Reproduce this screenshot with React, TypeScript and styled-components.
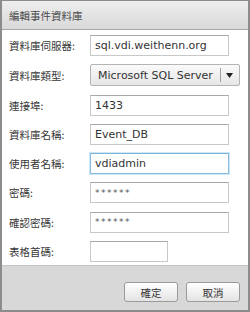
import React, { useState } from 'react';
import styled, { createGlobalStyle } from 'styled-components';

const GlobalStyle = createGlobalStyle`
  html, body {
    margin: 0;
    padding: 0;
    background: #ffffff;
  }
  * {
    box-sizing: border-box;
  }
`;

const Dialog = styled.div`
  width: 250px;
  height: 312px;
  display: flex;
  flex-direction: column;
  border: 1px solid #8c8c8c;
  border-left: 2px solid #8c8c8c;
  border-right: 2px solid #8c8c8c;
  border-bottom: 2px solid #8c8c8c;
  background: #ffffff;
  font-family: "DejaVu Sans", Verdana, "Noto Sans CJK TC", sans-serif;
  color: #333333;
`;

const TitleBar = styled.div`
  height: 29px;
  flex-shrink: 0;
  display: flex;
  align-items: center;
  padding-left: 7px;
  background: linear-gradient(to bottom, #eeeeee, #d9d9d9);
  border-bottom: 1px solid #a8a8a8;
  font-family: "Noto Sans CJK TC", sans-serif;
  font-size: 10.5px;
  color: #4a4a4a;
`;

const Body = styled.div`
  flex: 1;
  display: grid;
  grid-template-columns: 81px 1fr;
  align-content: start;
  row-gap: 8.3px;
  padding: 5px 0 0 7px;
`;

const Label = styled.label`
  display: flex;
  align-items: center;
  font-family: "Noto Sans CJK TC", sans-serif;
  font-size: 10.5px;
  color: #383838;
  white-space: nowrap;
`;

const Field = styled.input<{ $width: number; $focused?: boolean; $masked?: boolean }>`
  width: ${p => p.$width}px;
  height: 21px;
  margin: 0;
  padding: 0 4px;
  border: 1px solid ${p => (p.$focused ? '#86bde0' : '#c8c8c8')};
  border-top-color: ${p => (p.$focused ? '#7ab4dc' : '#a9a9a9')};
  box-shadow: ${p => (p.$focused ? '0 0 0 1px #cfe6f5' : 'none')};
  background: #ffffff;
  font-family: "DejaVu Sans", Verdana, sans-serif;
  font-size: ${p => (p.$masked ? '9px' : '11px')};
  letter-spacing: ${p => (p.$masked ? '1.5px' : '0')};
  color: ${p => (p.$masked ? '#555555' : '#333333')};
  outline: none;
`;

const Select = styled.div`
  width: 150px;
  height: 22px;
  display: flex;
  align-items: center;
  border: 1px solid #b4b4b4;
  border-radius: 2px;
  background: linear-gradient(to bottom, #fafafa, #e6e6e6);
  font-size: 11px;
  color: #333333;
`;

const SelectText = styled.span`
  flex: 1;
  padding-left: 7px;
  white-space: nowrap;
`;

const SelectArrow = styled.span`
  width: 18px;
  height: 14px;
  display: flex;
  align-items: center;
  justify-content: center;
  border-left: 1px solid #a0a0a0;
  margin-right: 1px;
`;

const Footer = styled.div`
  height: 45px;
  flex-shrink: 0;
  display: flex;
  justify-content: flex-end;
  align-items: flex-start;
  gap: 8px;
  padding: 16px 8px 0 0;
  background: #d8d8d8;
  border-top: 1px solid #c4c4c4;
`;

const Button = styled.button`
  width: 54px;
  height: 20px;
  padding: 0;
  border: 1px solid #9a9a9a;
  border-radius: 3px;
  background: linear-gradient(to bottom, #ffffff, #e4e4e4);
  font-family: "Noto Sans CJK TC", sans-serif;
  font-size: 10.5px;
  color: #333333;
  cursor: pointer;
`;

const App: React.FC = () => {
  const [form, setForm] = useState({
    server: 'sql.vdi.weithenn.org',
    port: '1433',
    dbName: 'Event_DB',
    user: 'vdiadmin',
    password: '******',
    confirm: '******',
    prefix: '',
  });

  const handleChange = (e: React.ChangeEvent<HTMLInputElement>) => {
    const { name, value } = e.target;
    setForm(prev => ({ ...prev, [name]: value }));
  };

  return (
    <Dialog>
      <GlobalStyle />
      <TitleBar>編輯事件資料庫</TitleBar>
      <Body>
        <Label>資料庫伺服器:</Label>
        <Field $width={139} name="server" value={form.server} onChange={handleChange} />

        <Label>資料庫類型:</Label>
        <Select>
          <SelectText>Microsoft SQL Server</SelectText>
          <SelectArrow>
            <svg width="7" height="5" viewBox="0 0 7 5">
              <path d="M0 0 L7 0 L3.5 5 Z" fill="#222" />
            </svg>
          </SelectArrow>
        </Select>

        <Label>連接埠:</Label>
        <Field $width={139} name="port" value={form.port} onChange={handleChange} />

        <Label>資料庫名稱:</Label>
        <Field $width={139} name="dbName" value={form.dbName} onChange={handleChange} />

        <Label>使用者名稱:</Label>
        <Field $width={139} $focused name="user" value={form.user} onChange={handleChange} />

        <Label>密碼:</Label>
        <Field $width={139} $masked name="password" value={form.password} onChange={handleChange} />

        <Label>確認密碼:</Label>
        <Field $width={139} $masked name="confirm" value={form.confirm} onChange={handleChange} />

        <Label>表格首碼:</Label>
        <Field $width={78} name="prefix" value={form.prefix} onChange={handleChange} />
      </Body>
      <Footer>
        <Button>確定</Button>
        <Button>取消</Button>
      </Footer>
    </Dialog>
  );
};

export default App;
